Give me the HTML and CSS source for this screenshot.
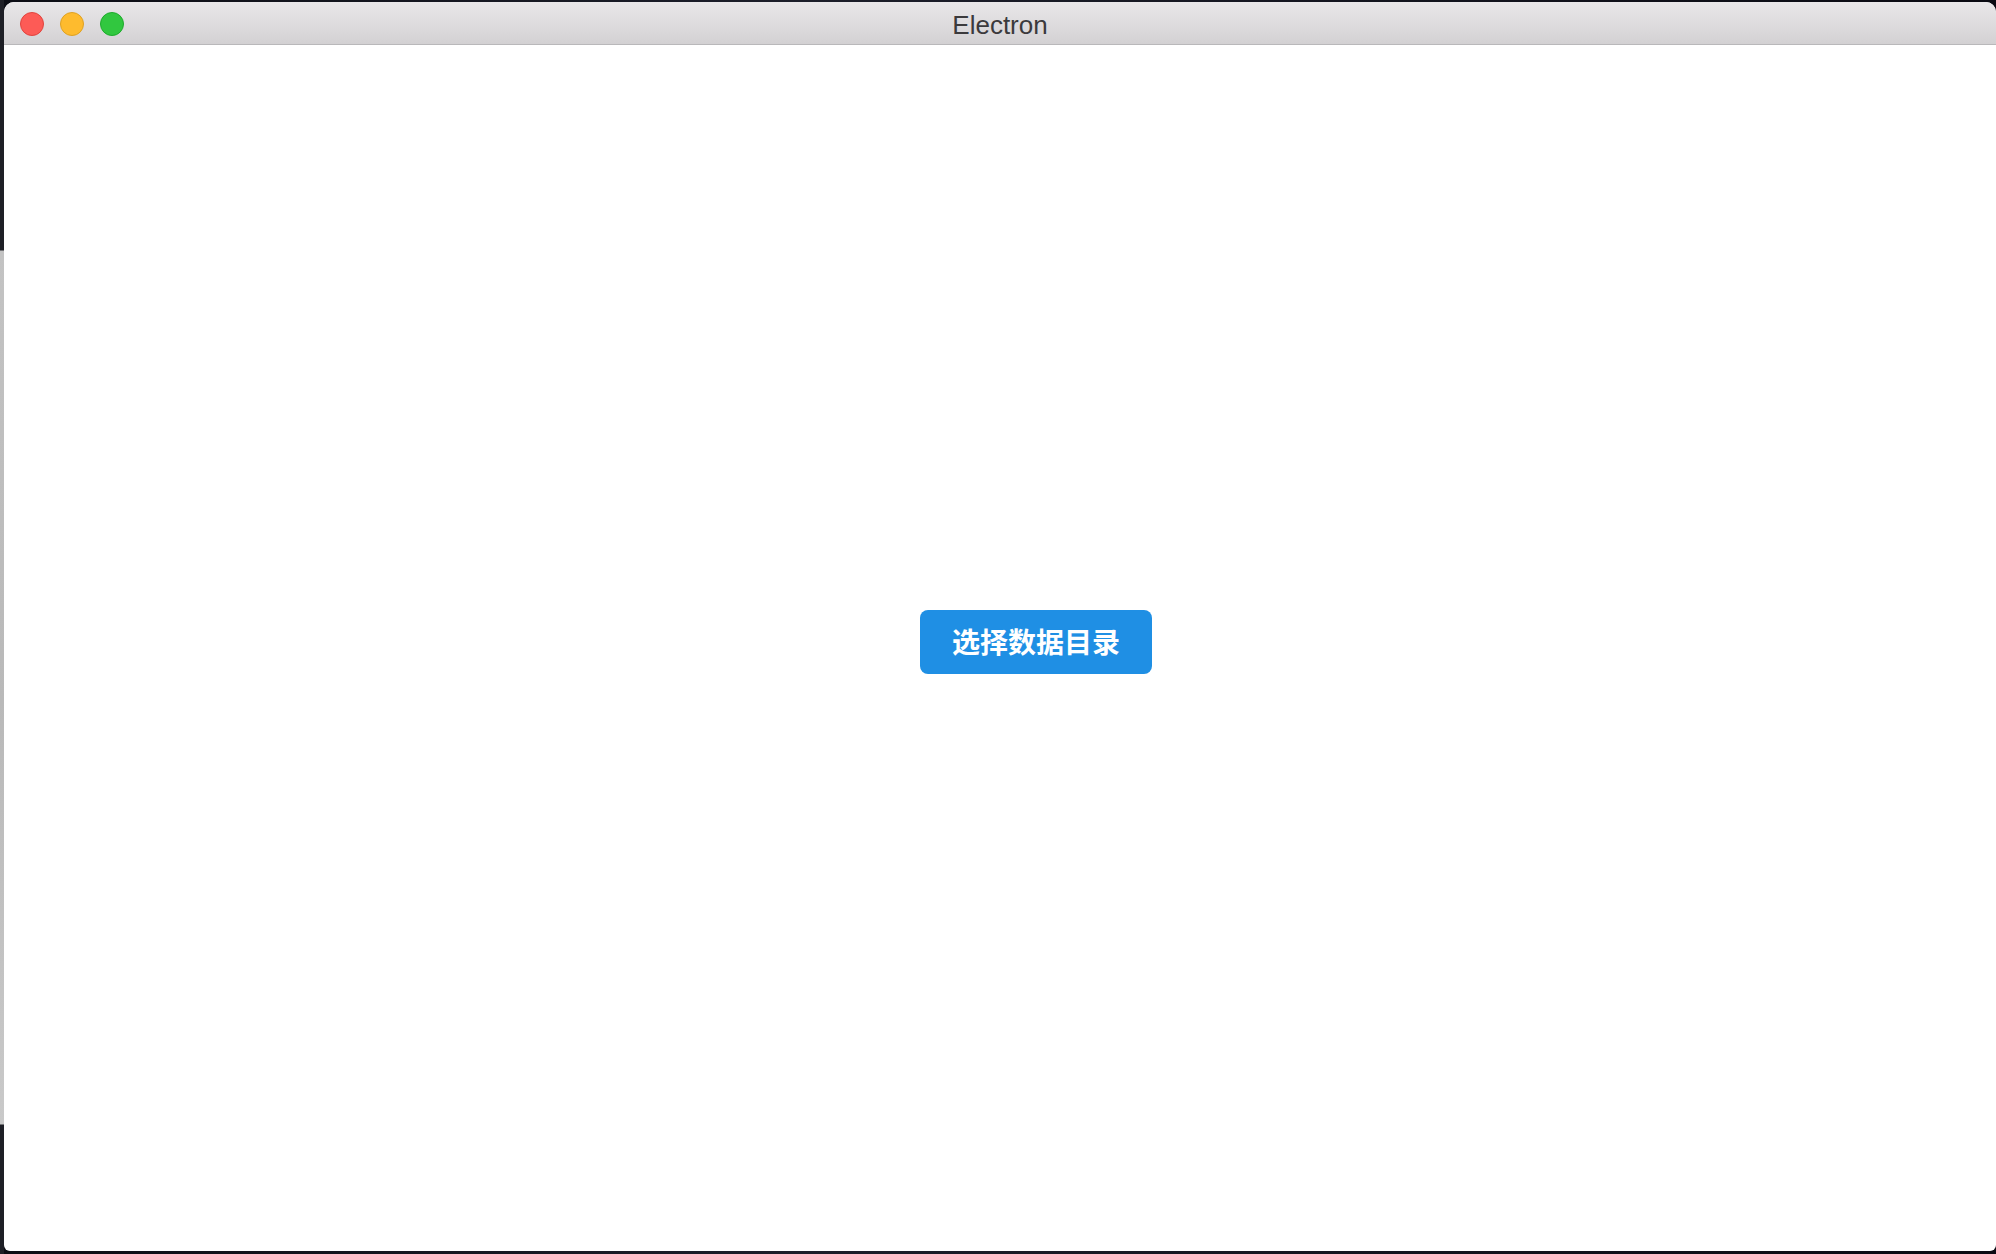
FILE: index.html
```html
<!DOCTYPE html>
<html lang="zh-CN">
<head>
<meta charset="utf-8">
<title>Electron</title>
<link rel="stylesheet" href="styles.css">
</head>
<body>
  <div class="desktop">
    <div class="edge"></div>
    <div class="window">
      <div class="titlebar">
        <div class="lights">
          <span class="light red"></span>
          <span class="light yellow"></span>
          <span class="light green"></span>
        </div>
        <div class="title">Electron</div>
      </div>
      <div class="content">
        <button class="pick">选择数据目录</button>
      </div>
    </div>
  </div>
</body>
</html>
```
FILE: styles.css
```css
html, body {
  margin: 0;
  padding: 0;
}
body {
  width: 1996px;
  height: 1254px;
  overflow: hidden;
  background: #1c1d24;
}
.desktop {
  display: flex;
  height: 1254px;
  background: linear-gradient(to right, #0c0d14 0, #1c1e2a 40%, #0a0a12 100%);
}
.edge {
  width: 4px;
  flex: none;
  background: linear-gradient(to bottom, #1e1f26 0, #1e1f26 250px, #c3c3c3 251px, #b9b9b9 700px, #c9c9c9 1124px, #1e1f26 1125px, #1e1f26 100%);
}
.window {
  margin-top: 2px;
  width: 1992px;
  height: 1249px;
  display: flex;
  flex-direction: column;
  background: #ffffff;
  border-radius: 10px 10px 6px 6px;
  overflow: hidden;
}
.titlebar {
  position: relative;
  height: 42px;
  flex: none;
  border-bottom: 1px solid #b9b8ba;
  background: linear-gradient(to bottom, #e9e7e9 0, #dcdadc 60%, #d3d1d3 100%);
  display: flex;
  align-items: center;
  justify-content: center;
}
.lights {
  position: absolute;
  left: 16px;
  top: 10px;
  display: flex;
  gap: 16px;
}
.light {
  width: 24px;
  height: 24px;
  border-radius: 50%;
  box-sizing: border-box;
}
.red {
  background: #fd5b56;
  border: 1px solid #e0443e;
}
.yellow {
  background: #febb2e;
  border: 1px solid #dea123;
}
.green {
  background: #31c73f;
  border: 1px solid #1eab2c;
}
.title {
  font-family: "Liberation Sans", Arial, sans-serif;
  font-size: 26px;
  color: #3b3a3c;
  margin-top: 4px;
}
.content {
  flex: 1;
  display: flex;
  align-items: center;
  justify-content: center;
  padding-left: 72px;
  padding-bottom: 12px;
}
.pick {
  width: 232px;
  height: 64px;
  border: none;
  border-radius: 8px;
  background: #1f8fe4;
  color: #ffffff;
  font-family: "Noto Sans CJK SC", "Noto Sans", sans-serif;
  font-weight: 700;
  font-size: 28px;
  letter-spacing: 0;
  padding: 0 0 2px 0;
}
```
